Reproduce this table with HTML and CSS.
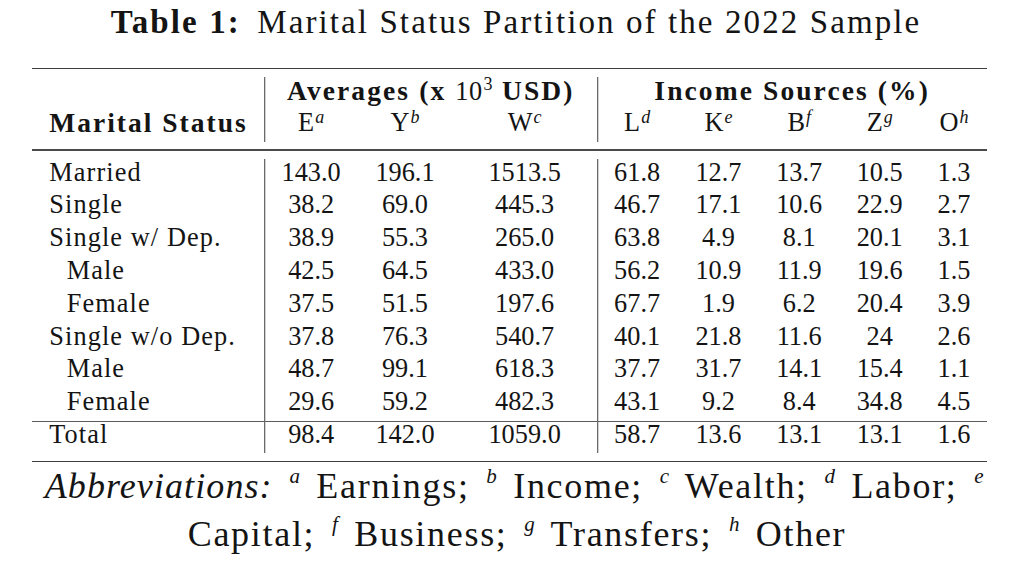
FILE: index.html
```html
<!DOCTYPE html>
<html lang="en">
<head>
<meta charset="utf-8">
<title>Table 1: Marital Status Partition of the 2022 Sample</title>
<link rel="stylesheet" href="styles.css">
</head>
<body>
<main class="page">
  <h1 class="caption"><span class="cap-label">Table 1:</span> Marital Status Partition of the 2022 Sample</h1>
  <table class="tbl">
    <colgroup>
      <col class="c-status"><col class="c-e"><col class="c-y"><col class="c-w"><col class="c-l"><col class="c-k"><col class="c-b"><col class="c-z"><col class="c-o">
    </colgroup>
    <tbody>
      <tr class="gap gap-top"><td colspan="9"></td></tr>
      <tr class="head">
        <td class="label"></td>
        <td class="group vl" colspan="3">Averages (x <span class="math">10<sup class="msup">3</sup></span> USD)</td>
        <td class="group vl" colspan="5">Income Sources (%)</td>
      </tr>
      <tr class="head">
        <td class="label strong">Marital Status</td>
        <td class="vl">E<sup class="hsup">a</sup></td>
        <td>Y<sup class="hsup">b</sup></td>
        <td>W<sup class="hsup">c</sup></td>
        <td class="vl">L<sup class="hsup">d</sup></td>
        <td>K<sup class="hsup">e</sup></td>
        <td>B<sup class="hsup">f</sup></td>
        <td>Z<sup class="hsup">g</sup></td>
        <td>O<sup class="hsup">h</sup></td>
      </tr>
      <tr class="gap gap-a"><td colspan="9"></td></tr>
      <tr class="rule"><td colspan="9"></td></tr>
      <tr class="gap gap-b"><td colspan="9"></td></tr>
      <tr class="row">
        <td class="label">Married</td>
        <td class="vl">143.0</td><td>196.1</td><td>1513.5</td>
        <td class="vl">61.8</td><td>12.7</td><td>13.7</td><td>10.5</td><td>1.3</td>
      </tr>
      <tr class="row">
        <td class="label">Single</td>
        <td class="vl">38.2</td><td>69.0</td><td>445.3</td>
        <td class="vl">46.7</td><td>17.1</td><td>10.6</td><td>22.9</td><td>2.7</td>
      </tr>
      <tr class="row">
        <td class="label">Single w/ Dep.</td>
        <td class="vl">38.9</td><td>55.3</td><td>265.0</td>
        <td class="vl">63.8</td><td>4.9</td><td>8.1</td><td>20.1</td><td>3.1</td>
      </tr>
      <tr class="row">
        <td class="label sub">Male</td>
        <td class="vl">42.5</td><td>64.5</td><td>433.0</td>
        <td class="vl">56.2</td><td>10.9</td><td>11.9</td><td>19.6</td><td>1.5</td>
      </tr>
      <tr class="row">
        <td class="label sub">Female</td>
        <td class="vl">37.5</td><td>51.5</td><td>197.6</td>
        <td class="vl">67.7</td><td>1.9</td><td>6.2</td><td>20.4</td><td>3.9</td>
      </tr>
      <tr class="row">
        <td class="label">Single w/o Dep.</td>
        <td class="vl">37.8</td><td>76.3</td><td>540.7</td>
        <td class="vl">40.1</td><td>21.8</td><td>11.6</td><td>24</td><td>2.6</td>
      </tr>
      <tr class="row">
        <td class="label sub">Male</td>
        <td class="vl">48.7</td><td>99.1</td><td>618.3</td>
        <td class="vl">37.7</td><td>31.7</td><td>14.1</td><td>15.4</td><td>1.1</td>
      </tr>
      <tr class="row">
        <td class="label sub">Female</td>
        <td class="vl">29.6</td><td>59.2</td><td>482.3</td>
        <td class="vl">43.1</td><td>9.2</td><td>8.4</td><td>34.8</td><td>4.5</td>
      </tr>
      <tr class="row total">
        <td class="label">Total</td>
        <td class="vl">98.4</td><td>142.0</td><td>1059.0</td>
        <td class="vl">58.7</td><td>13.6</td><td>13.1</td><td>13.1</td><td>1.6</td>
      </tr>
      <tr class="gap gap-c"><td colspan="9"></td></tr>
    </tbody>
  </table>
  <p class="notes"><span class="abbr">Abbreviations:</span> <sup class="nsup">a</sup> Earnings; <sup class="nsup">b</sup> Income; <sup class="nsup">c</sup> Wealth; <sup class="nsup">d</sup> Labor; <sup class="nsup">e</sup><br>Capital; <sup class="nsup">f</sup> Business; <sup class="nsup">g</sup> Transfers; <sup class="nsup">h</sup> Other</p>
</main>
</body>
</html>
```

FILE: styles.css
```css
html, body {
  margin: 0;
  padding: 0;
  background: #ffffff;
}

body {
  font-family: "Liberation Serif", "Times New Roman", serif;
  color: #141414;
}

.page {
  width: 1024px;
  height: 568px;
  overflow: hidden;
}

/* ---------- caption ---------- */
.caption {
  margin: 0;
  padding: 2px 0 0 8px;
  font-size: 33px;
  line-height: 40px;
  font-weight: normal;
  text-align: center;
  letter-spacing: 2.1px;
  white-space: nowrap;
}

.cap-label {
  font-weight: bold;
  letter-spacing: 2.1px;
  margin-right: 6px;
}

/* ---------- table ---------- */
.tbl {
  margin: 25.5px 0 0 32px;
  width: 955px;
  table-layout: fixed;
  border-collapse: separate;
  border-spacing: 0;
  border-top: 1.7px solid #3e3e3e;
  border-bottom: 1.8px solid #3e3e3e;
  font-size: 26.3px;
}

.c-status { width: 232.3px; }
.c-e { width: 93.7px; }
.c-y { width: 94px; }
.c-w { width: 145.3px; }
.c-l { width: 79.7px; }
.c-k { width: 83px; }
.c-b { width: 78.5px; }
.c-z { width: 82.5px; }
.c-o { width: 66px; }

.tbl td {
  padding: 0;
  text-align: center;
  vertical-align: top;
  white-space: nowrap;
}

.gap td,
.rule td {
  font-size: 0;
  line-height: 0;
}

.gap-top td { height: 8.1px; }
.gap-a td { height: 7.7px; }
.rule td { height: 1.3px; background: #4a4a4a; }
.gap-b td { height: 7.8px; }
.gap-c td { height: 8.5px; }

.head td {
  height: 32.6px;
  line-height: 28.2px;
}

.row td {
  height: 32.8px;
  line-height: 28.2px;
}

.tbl td.label {
  text-align: left;
  padding-left: 17.3px;
  letter-spacing: 1.1px;
}

.tbl td.sub {
  padding-left: 34.7px;
}

.strong,
.group {
  font-weight: bold;
  font-size: 27.5px;
  letter-spacing: 2px;
}

.tbl td.strong {
  letter-spacing: 2px;
}

.tbl td.group:first-of-type,
.group {
  letter-spacing: 2.1px;
}

.math {
  font-weight: normal;
  font-size: 26.3px;
  letter-spacing: 0.5px;
}

.msup {
  font-size: 18px;
  vertical-align: 10px;
  line-height: 0;
  margin-left: 1px;
}

.hsup {
  font-style: italic;
  font-size: 18px;
  vertical-align: 8.5px;
  line-height: 0;
  margin-left: 1px;
}

.vl {
  box-shadow: inset 1.3px 0 0 #6a6a6a;
}

.total td {
  height: 31.6px;
  line-height: 27.4px;
  box-shadow: inset 0 1.1px 0 #5a5a5a;
}

.total td.vl {
  box-shadow: inset 1.3px 0 0 #6a6a6a, inset 0 1.1px 0 #5a5a5a;
}

/* ---------- notes ---------- */
.notes {
  margin: 0;
  padding-left: 10px;
  font-size: 36px;
  line-height: 48px;
  text-align: center;
  letter-spacing: 1.7px;
  white-space: nowrap;
}

.abbr {
  font-style: italic;
  letter-spacing: 1.1px;
}

.nsup {
  font-style: italic;
  font-size: 21px;
  vertical-align: 15px;
  line-height: 0;
  margin: 0 4px 0 6px;
}
```
